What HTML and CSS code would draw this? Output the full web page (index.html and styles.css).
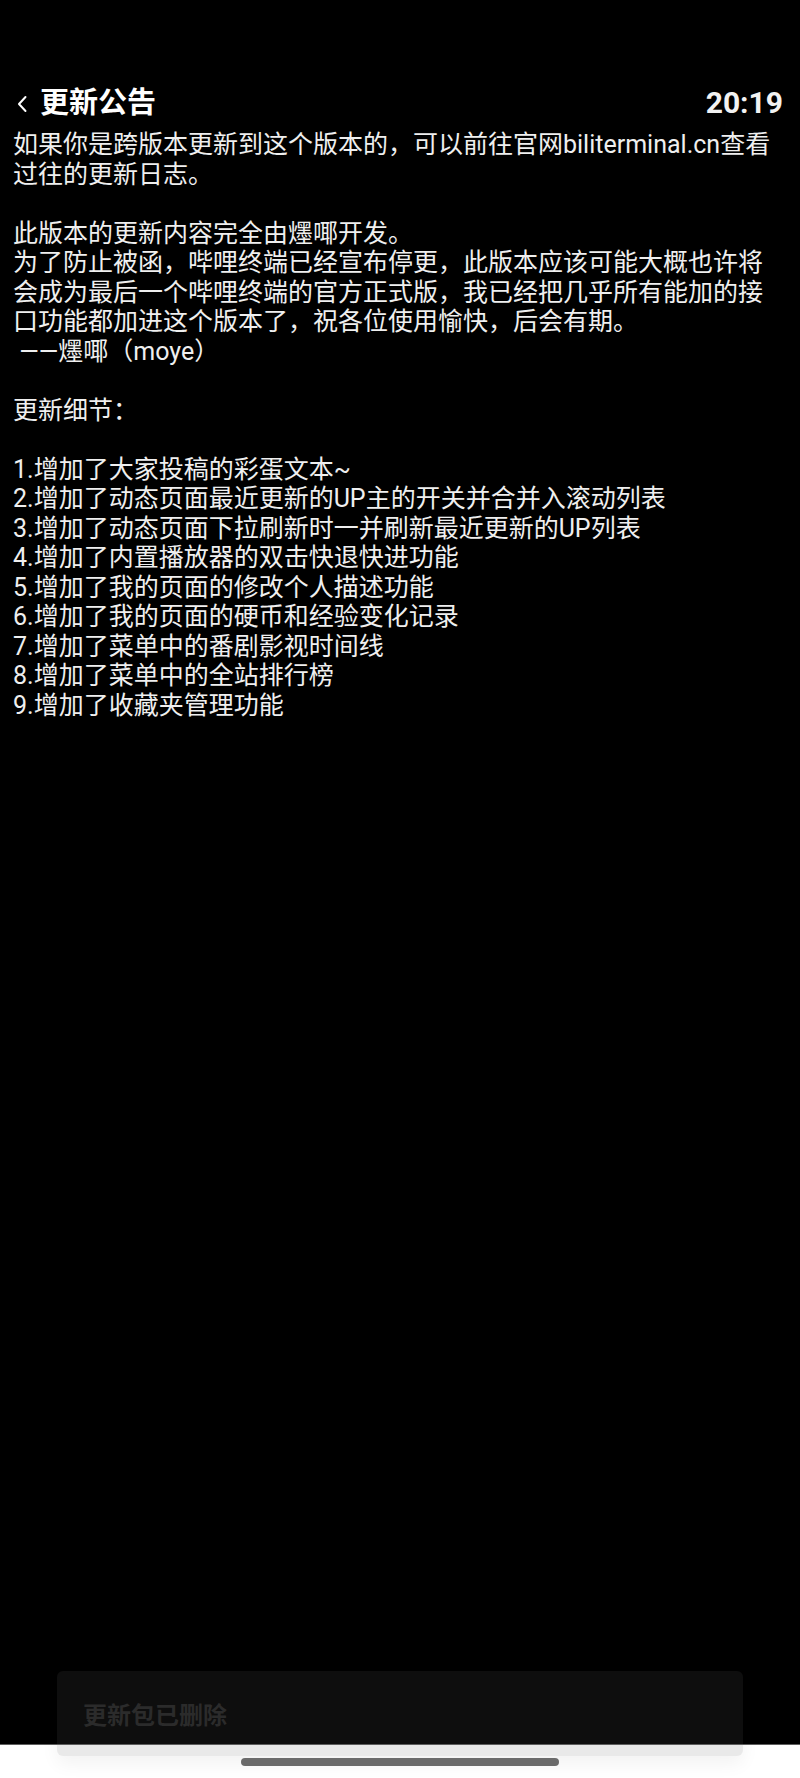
FILE: index.html
```html
<!DOCTYPE html>
<html lang="zh-CN">
<head>
<meta charset="utf-8">
<title>更新公告</title>
<link rel="stylesheet" href="styles.css">
</head>
<body>
<div class="screen">
  <header class="topbar">
    <div class="title-group">
      <svg class="back" viewBox="0 0 12 18" width="12" height="18" aria-hidden="true">
        <path d="M9.5 2 L3 9 L9.5 16" fill="none" stroke="#ffffff" stroke-width="2" stroke-linecap="round" stroke-linejoin="round"/>
      </svg>
      <h1 class="title">更新公告</h1>
    </div>
    <span class="clock">20:19</span>
  </header>
  <main class="notes">
    <p>如果你是跨版本更新到这个版本的，可以前往官网biliterminal.cn查看<br>过往的更新日志。</p>
    <p>此版本的更新内容完全由爅㖿开发。<br>为了防止被函，哔哩终端已经宣布停更，此版本应该可能大概也许将<br>会成为最后一个哔哩终端的官方正式版，我已经把几乎所有能加的接<br>口功能都加进这个版本了，祝各位使用愉快，后会有期。<br>&nbsp;——爅㖿（moye）</p>
    <p>更新细节：</p>
    <ul class="changes">
      <li>1.增加了大家投稿的彩蛋文本~</li>
      <li>2.增加了动态页面最近更新的UP主的开关并合并入滚动列表</li>
      <li>3.增加了动态页面下拉刷新时一并刷新最近更新的UP列表</li>
      <li>4.增加了内置播放器的双击快退快进功能</li>
      <li>5.增加了我的页面的修改个人描述功能</li>
      <li>6.增加了我的页面的硬币和经验变化记录</li>
      <li>7.增加了菜单中的番剧影视时间线</li>
      <li>8.增加了菜单中的全站排行榜</li>
      <li>9.增加了收藏夹管理功能</li>
    </ul>
  </main>
  <div class="toast">更新包已删除</div>
  <nav class="navbar"><span class="pill"></span></nav>
</div>
</body>
</html>
```

FILE: styles.css
```css
html, body {
  margin: 0;
  padding: 0;
  background: #000;
}

.screen {
  position: relative;
  width: 800px;
  height: 1778px;
  display: flex;
  flex-direction: column;
  background: #000;
  color: #efefef;
  font-family: Roboto, "Noto Sans CJK SC", "Noto Sans CJK TC", "Noto Sans CJK JP", sans-serif;
  overflow: hidden;
}

.topbar {
  display: flex;
  align-items: center;
  justify-content: space-between;
  height: 40px;
  margin-top: 83px;
  padding: 0 17px 0 16px;
}

.title-group {
  display: flex;
  align-items: center;
  gap: 12px;
}

.back {
  display: block;
  margin-top: 2px;
}

.title {
  margin: 0;
  font-size: 29px;
  font-weight: 700;
  color: #ffffff;
  line-height: 40px;
}

.clock {
  font-size: 30px;
  font-weight: 700;
  color: #f2f2f2;
  line-height: 40px;
}

.notes {
  flex: 1;
  margin-top: 7px;
  padding: 0 13px;
  font-size: 25px;
  line-height: 29.5px;
  white-space: nowrap;
}

.notes p {
  margin: 0 0 29.5px;
}

.changes {
  list-style: none;
  margin: 0;
  padding: 0;
}

.toast {
  position: absolute;
  left: 57px;
  top: 1671px;
  width: 686px;
  height: 85px;
  box-sizing: border-box;
  padding-left: 26px;
  display: flex;
  align-items: center;
  border-radius: 6px;
  background: rgba(99, 99, 99, 0.14);
  box-shadow: 0 8px 18px rgba(0, 0, 0, 0.05);
  color: #2b2b2b;
  font-size: 24px;
  font-weight: 700;
  z-index: 2;
}

.navbar {
  flex: none;
  height: 20px;
  border-top: 1px solid #5e5e5e;
  background: #ffffff;
  display: flex;
  justify-content: center;
  padding-top: 13px;
}

.pill {
  display: block;
  width: 318px;
  height: 8px;
  border-radius: 4px;
  background: #6b6b6b;
  position: relative;
  z-index: 3;
}
```
